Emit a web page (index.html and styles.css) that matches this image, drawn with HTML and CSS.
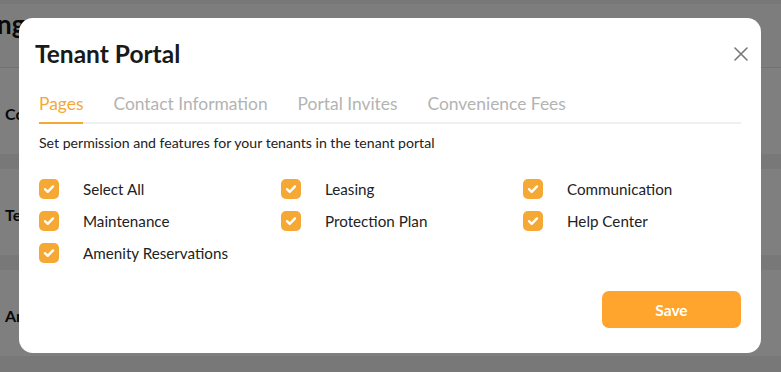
FILE: index.html
```html
<!DOCTYPE html>
<html lang="en">
<head>
    <meta charset="UTF-8">
    <meta name="viewport" content="width=device-width, initial-scale=1.0">
    <title>Tenant Portal</title>
    <link rel="stylesheet" href="styles.css">
</head>
<body>
    <!-- page behind the dialog -->
    <div class="page">
        <h1 class="page-title">Settings</h1>
        <div class="page-row">Communication</div>
        <div class="page-row">Tenant Portal</div>
        <div class="page-row">Amenities</div>
    </div>
    <div class="overlay"></div>

    <div class="modal">
        <div class="modal-header">
            <h2 class="modal-title">Tenant Portal</h2>
            <button class="close-btn" aria-label="Close">
                <svg width="16" height="16" viewBox="0 0 16 16"><path d="M2 2L14 14M14 2L2 14" stroke="#777" stroke-width="1.6" stroke-linecap="round"/></svg>
            </button>
        </div>

        <div class="tabs">
            <div class="tab active">Pages</div>
            <div class="tab">Contact Information</div>
            <div class="tab">Portal Invites</div>
            <div class="tab">Convenience Fees</div>
        </div>

        <p class="desc">Set permission and features for your tenants in the tenant portal</p>

        <div class="options">
            <label class="option"><span class="check"></span>Select All</label>
            <label class="option"><span class="check"></span>Leasing</label>
            <label class="option"><span class="check"></span>Communication</label>
            <label class="option"><span class="check"></span>Maintenance</label>
            <label class="option"><span class="check"></span>Protection Plan</label>
            <label class="option"><span class="check"></span>Help Center</label>
            <label class="option"><span class="check"></span>Amenity Reservations</label>
        </div>

        <div class="modal-footer">
            <button class="save-btn">Save</button>
        </div>
    </div>
</body>
</html>
```

FILE: styles.css
```css
* {
    box-sizing: border-box;
}
body {
    margin: 0;
    font-family: Lato, "Noto Sans", sans-serif;
    color: #222;
    background: #f0f0f0;
    height: 372px;
    overflow: hidden;
}
.page {
    padding-top: 4px;
}
.page-title {
    margin: 0 0 0 -56px;
    height: 64px;
    font-size: 26px;
    font-weight: 700;
    color: #111;
    background: #fbfbfb;
    padding-top: 4px;
    border-bottom: 1px solid #e4e4e4;
}
.page-row {
    height: 86px;
    margin-bottom: 15px;
    background: #fff;
    padding-left: 5px;
    padding-top: 4px;
    display: flex;
    align-items: center;
    font-size: 16px;
    font-weight: 700;
    color: #111;
}
.overlay {
    position: fixed;
    inset: 0;
    background: rgba(0, 0, 0, 0.5);
}
.modal {
    position: fixed;
    left: 19px;
    top: 18px;
    width: 742px;
    height: 335px;
    background: #fff;
    border-radius: 14px;
    padding: 0 20px 25px 20px;
    display: flex;
    flex-direction: column;
}
.modal-header {
    display: flex;
    align-items: center;
    justify-content: space-between;
    padding-top: 20px;
    height: 52px;
}
.modal-title {
    margin: 0 0 0 -4px;
    font-size: 24.5px;
    font-weight: 700;
    color: #1a1a1a;
    line-height: 32px;
}
.close-btn {
    border: none;
    background: none;
    padding: 0;
    margin-right: -8px;
    width: 16px;
    height: 16px;
    cursor: pointer;
}
.tabs {
    display: flex;
    gap: 30px;
    margin-top: 22px;
    border-bottom: 2px solid #f0f0f0;
}
.tab {
    font-size: 17.4px;
    line-height: 24px;
    padding-bottom: 6px;
    color: #b3b3b3;
    margin-bottom: -2px;
    border-bottom: 2px solid transparent;
}
.tab.active {
    color: #f5a834;
    border-bottom-color: #f5a834;
}
.desc {
    margin: 10px 0 0 0;
    font-size: 14.1px;
    line-height: 18px;
    color: #222;
}
.options {
    display: grid;
    grid-template-columns: repeat(3, 1fr);
    column-gap: 24px;
    row-gap: 12px;
    margin-top: 27px;
}
.option {
    display: flex;
    align-items: center;
    gap: 24px;
    height: 20px;
    font-size: 15.2px;
    color: #222;
}
.check {
    width: 20px;
    height: 20px;
    border-radius: 5px;
    background: #f5a834 url("data:image/svg+xml;utf8,<svg xmlns='http://www.w3.org/2000/svg' width='20' height='20' viewBox='0 0 20 20'><path d='M6 10.2L8.7 12.8L14 7.4' fill='none' stroke='white' stroke-width='2.4' stroke-linecap='round' stroke-linejoin='round'/></svg>") center no-repeat;
    flex-shrink: 0;
}
.modal-footer {
    margin-top: auto;
    display: flex;
    justify-content: flex-end;
}
.save-btn {
    width: 139px;
    height: 37px;
    border: none;
    border-radius: 7px;
    background: #ffa42d;
    color: #fff;
    font-family: Lato, "Noto Sans", sans-serif;
    font-size: 15.5px;
    font-weight: 700;
    cursor: pointer;
}
```
